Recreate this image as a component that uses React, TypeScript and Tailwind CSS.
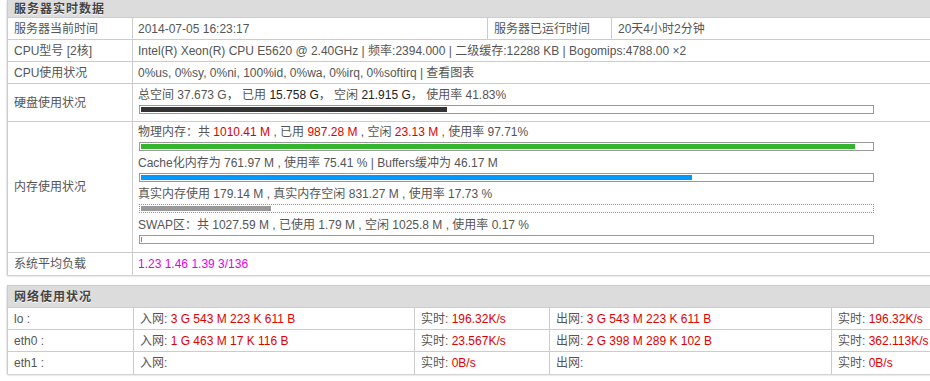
import React from "react";

const red = "text-[#e00000]";

function Bar({ pct, fill, dotted }: { pct: number; fill: string; dotted?: boolean }) {
  return (
    <div
      className={`ml-[1px] mt-[2px] h-[9px] w-[735px] p-[1px] bg-white border ${
        dotted ? "border-dotted" : "border-solid"
      } border-[#999]`}
    >
      <div className={`h-full ${fill}`} style={{ width: `${pct}%` }} />
    </div>
  );
}

export default function App() {
  return (
    <div className="w-[930px] h-[381px] overflow-hidden bg-white font-['Liberation_Sans','Noto_Sans_CJK_SC',sans-serif] text-[12px] text-[#555] leading-[16px]">
      {/* Table 1 */}
      <div className="ml-[7px] w-[960px] border-l border-[#ccc] shadow-[0_1px_2px_rgba(0,0,0,0.25)]">
        <div className="h-[18px] bg-[#dcdcdc] border-b border-[#ccc] pl-[6px] flex items-center font-bold tracking-[1px] text-[#444] [text-shadow:0_1px_0_#fff]">
          服务器实时数据
        </div>
        <div className="flex h-[22px] border-b border-[#ccc]">
          <div className="w-[125px] shrink-0 border-r border-[#ccc] pl-[6px] flex items-center">服务器当前时间</div>
          <div className="w-[355px] shrink-0 border-r border-[#ccc] pl-[5px] flex items-center">2014-07-05 16:23:17</div>
          <div className="w-[124px] shrink-0 border-r border-[#ccc] pl-[6px] flex items-center">服务器已运行时间</div>
          <div className="flex-1 pl-[6px] flex items-center">20天4小时2分钟</div>
        </div>
        <div className="flex h-[22px] border-b border-[#ccc]">
          <div className="w-[125px] shrink-0 border-r border-[#ccc] pl-[6px] flex items-center">CPU型号 [2核]</div>
          <div className="flex-1 pl-[5px] flex items-center whitespace-nowrap">
            Intel(R) Xeon(R) CPU E5620 @ 2.40GHz | 频率:2394.000 | 二级缓存:12288 KB | Bogomips:4788.00 ×2
          </div>
        </div>
        <div className="flex h-[22px] border-b border-[#ccc]">
          <div className="w-[125px] shrink-0 border-r border-[#ccc] pl-[6px] flex items-center">CPU使用状况</div>
          <div className="flex-1 pl-[5px] flex items-center whitespace-nowrap">
            0%us, 0%sy, 0%ni, 100%id, 0%wa, 0%irq, 0%softirq | 查看图表
          </div>
        </div>
        <div className="flex h-[38px] border-b border-[#ccc]">
          <div className="w-[125px] shrink-0 border-r border-[#ccc] pl-[6px] flex items-center">硬盘使用状况</div>
          <div className="flex-1 pl-[5px] pt-[3px]">
            <div className="whitespace-nowrap">
              总空间 37.673 G， 已用 <span className="text-[#222]">15.758 G</span>， 空闲{" "}
              <span className="text-[#222]">21.915 G</span>， 使用率 41.83%
            </div>
            <div className="mt-[2px]">
              <Bar pct={41.83} fill="bg-[#333]" />
            </div>
          </div>
        </div>
        <div className="flex h-[131px] border-b border-[#ccc]">
          <div className="w-[125px] shrink-0 border-r border-[#ccc] pl-[6px] flex items-center">内存使用状况</div>
          <div className="flex-1 pl-[5px] pt-[2px]">
            <div className="whitespace-nowrap">
              物理内存：共 <span className={red}>1010.41 M</span> , 已用 <span className={red}>987.28 M</span> , 空闲{" "}
              <span className={red}>23.13 M</span> , 使用率 97.71%
            </div>
            <Bar pct={97.71} fill="bg-[#36b32f]" />
            <div className="mt-[4px] whitespace-nowrap">
              Cache化内存为 761.97 M , 使用率 75.41 % | Buffers缓冲为 46.17 M
            </div>
            <Bar pct={75.41} fill="bg-[#0099ff]" />
            <div className="mt-[4px] whitespace-nowrap">
              真实内存使用 179.14 M , 真实内存空闲 831.27 M , 使用率 17.73 %
            </div>
            <Bar pct={17.73} fill="bg-[#999]" dotted />
            <div className="mt-[4px] whitespace-nowrap">
              SWAP区：共 1027.59 M , 已使用 1.79 M , 空闲 1025.8 M , 使用率 0.17 %
            </div>
            <Bar pct={0.17} fill="bg-[#ff6600] min-w-[1px]" />
          </div>
        </div>
        <div className="flex h-[22px]">
          <div className="w-[125px] shrink-0 border-r border-[#ccc] pl-[6px] flex items-center">系统平均负载</div>
          <div className="flex-1 pl-[5px] flex items-center text-[#e600e6]">1.23 1.46 1.39 3/136</div>
        </div>
      </div>

      {/* Table 2 */}
      <div className="mt-[10px] ml-[7px] w-[960px] border-l border-t border-[#ccc] shadow-[0_1px_2px_rgba(0,0,0,0.25)]">
        <div className="h-[22px] bg-[#dcdcdc] border-b border-[#ccc] pl-[6px] flex items-center font-bold tracking-[1px] text-[#444] [text-shadow:0_1px_0_#fff]">
          网络使用状况
        </div>
        {[
          { n: "lo :", i: "3 G 543 M 223 K 611 B", ir: "196.32K/s", o: "3 G 543 M 223 K 611 B", or: "196.32K/s" },
          { n: "eth0 :", i: "1 G 463 M 17 K 116 B", ir: "23.567K/s", o: "2 G 398 M 289 K 102 B", or: "362.113K/s" },
          { n: "eth1 :", i: "", ir: "0B/s", o: "", or: "0B/s" },
        ].map((r, idx) => (
          <div key={idx} className={`flex h-[22px] ${idx < 2 ? "border-b" : ""} border-[#ccc]`}>
            <div className="w-[126px] shrink-0 border-r border-[#ccc] pl-[6px] flex items-center">{r.n}</div>
            <div className="w-[281px] shrink-0 border-r border-[#ccc] pl-[6px] flex items-center whitespace-nowrap">
              入网:&nbsp;<span className={red}>{r.i}</span>
            </div>
            <div className="w-[135px] shrink-0 border-r border-[#ccc] pl-[6px] flex items-center whitespace-nowrap">
              实时:&nbsp;<span className={red}>{r.ir}</span>
            </div>
            <div className="w-[282px] shrink-0 border-r border-[#ccc] pl-[6px] flex items-center whitespace-nowrap">
              出网:&nbsp;<span className={red}>{r.o}</span>
            </div>
            <div className="flex-1 pl-[6px] flex items-center whitespace-nowrap">
              实时:&nbsp;<span className={red}>{r.or}</span>
            </div>
          </div>
        ))}
      </div>
    </div>
  );
}
